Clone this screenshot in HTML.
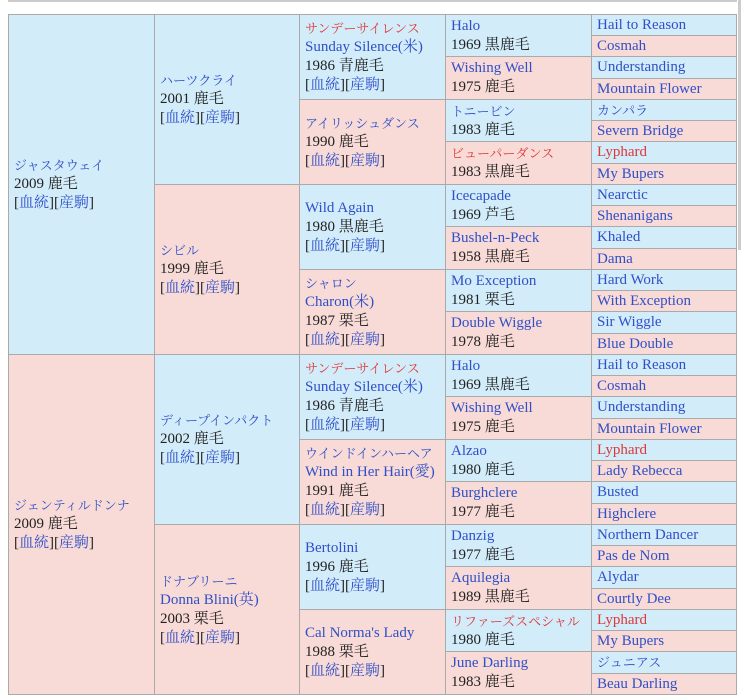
<!DOCTYPE html>
<html><head><meta charset="utf-8"><style>
body{margin:0;width:741px;height:700px;background:#fff;position:relative;overflow:hidden;font-family:"Liberation Serif","Noto Serif CJK SC","Noto Sans CJK JP",serif;font-size:15px;color:#222}
.c{position:absolute;box-sizing:border-box;border:1px solid #aaa;display:flex;flex-direction:column;justify-content:center;padding-left:5px;line-height:19px;white-space:nowrap;overflow:hidden}
.b{background:#d2ecfa}.p{background:#f8dad6}
.n{color:#3050c8}.r{color:#dd3838}
.j{font-size:13px;letter-spacing:0}
a{color:#3050c8;text-decoration:none}
</style></head><body>
<div style="position:absolute;left:8px;top:0;width:729px;height:2px;background:#ccc"></div>
<div style="position:absolute;left:738px;top:0;width:3px;height:250px;background:#ccc"></div>

<!-- Gen1 -->
<div class="c p" style="left:8px;top:354px;width:147px;height:341px"><span class="n j">ジェンティルドンナ</span><span>2009 鹿毛</span><span>[<a>血統</a>][<a>産駒</a>]</span></div>
<div class="c b" style="left:8px;top:14px;width:147px;height:341px"><span class="n j">ジャスタウェイ</span><span>2009 鹿毛</span><span>[<a>血統</a>][<a>産駒</a>]</span></div>

<!-- Gen2 -->
<div class="c b" style="left:154px;top:14px;width:146px;height:171px"><span class="n j">ハーツクライ</span><span>2001 鹿毛</span><span>[<a>血統</a>][<a>産駒</a>]</span></div>
<div class="c p" style="left:154px;top:184px;width:146px;height:171px"><span class="n j">シビル</span><span>1999 鹿毛</span><span>[<a>血統</a>][<a>産駒</a>]</span></div>
<div class="c b" style="left:154px;top:354px;width:146px;height:171px"><span class="n j">ディープインパクト</span><span>2002 鹿毛</span><span>[<a>血統</a>][<a>産駒</a>]</span></div>
<div class="c p" style="left:154px;top:524px;width:146px;height:171px"><span class="n j">ドナブリーニ</span><span class="n">Donna Blini(英)</span><span>2003 栗毛</span><span>[<a>血統</a>][<a>産駒</a>]</span></div>

<!-- Gen3 -->
<div class="c b" style="left:299px;top:14px;width:147px;height:86px"><span class="r j">サンデーサイレンス</span><span class="n">Sunday Silence(米)</span><span>1986 青鹿毛</span><span>[<a>血統</a>][<a>産駒</a>]</span></div>
<div class="c p" style="left:299px;top:99px;width:147px;height:86px"><span class="n j">アイリッシュダンス</span><span>1990 鹿毛</span><span>[<a>血統</a>][<a>産駒</a>]</span></div>
<div class="c b" style="left:299px;top:184px;width:147px;height:86px"><span class="n">Wild Again</span><span>1980 黒鹿毛</span><span>[<a>血統</a>][<a>産駒</a>]</span></div>
<div class="c p" style="left:299px;top:269px;width:147px;height:86px"><span class="n j">シャロン</span><span class="n">Charon(米)</span><span>1987 栗毛</span><span>[<a>血統</a>][<a>産駒</a>]</span></div>
<div class="c b" style="left:299px;top:354px;width:147px;height:86px"><span class="r j">サンデーサイレンス</span><span class="n">Sunday Silence(米)</span><span>1986 青鹿毛</span><span>[<a>血統</a>][<a>産駒</a>]</span></div>
<div class="c p" style="left:299px;top:439px;width:147px;height:86px"><span class="n j">ウインドインハーヘア</span><span class="n">Wind in Her Hair(愛)</span><span>1991 鹿毛</span><span>[<a>血統</a>][<a>産駒</a>]</span></div>
<div class="c b" style="left:299px;top:524px;width:147px;height:86px"><span class="n">Bertolini</span><span>1996 鹿毛</span><span>[<a>血統</a>][<a>産駒</a>]</span></div>
<div class="c p" style="left:299px;top:609px;width:147px;height:86px"><span class="n">Cal Norma's Lady</span><span>1988 栗毛</span><span>[<a>血統</a>][<a>産駒</a>]</span></div>

<!-- Gen4 -->
<div class="c b" style="left:445px;top:14px;width:147px;height:43px"><span class="n">Halo</span><span>1969 黒鹿毛</span></div>
<div class="c p" style="left:445px;top:56px;width:147px;height:44px"><span class="n">Wishing Well</span><span>1975 鹿毛</span></div>
<div class="c b" style="left:445px;top:99px;width:147px;height:43px"><span class="n j">トニービン</span><span>1983 鹿毛</span></div>
<div class="c p" style="left:445px;top:141px;width:147px;height:44px"><span class="r j">ビューパーダンス</span><span>1983 黒鹿毛</span></div>
<div class="c b" style="left:445px;top:184px;width:147px;height:43px"><span class="n">Icecapade</span><span>1969 芦毛</span></div>
<div class="c p" style="left:445px;top:226px;width:147px;height:44px"><span class="n">Bushel-n-Peck</span><span>1958 黒鹿毛</span></div>
<div class="c b" style="left:445px;top:269px;width:147px;height:43px"><span class="n">Mo Exception</span><span>1981 栗毛</span></div>
<div class="c p" style="left:445px;top:311px;width:147px;height:44px"><span class="n">Double Wiggle</span><span>1978 鹿毛</span></div>
<div class="c b" style="left:445px;top:354px;width:147px;height:43px"><span class="n">Halo</span><span>1969 黒鹿毛</span></div>
<div class="c p" style="left:445px;top:396px;width:147px;height:44px"><span class="n">Wishing Well</span><span>1975 鹿毛</span></div>
<div class="c b" style="left:445px;top:439px;width:147px;height:43px"><span class="n">Alzao</span><span>1980 鹿毛</span></div>
<div class="c p" style="left:445px;top:481px;width:147px;height:44px"><span class="n">Burghclere</span><span>1977 鹿毛</span></div>
<div class="c b" style="left:445px;top:524px;width:147px;height:43px"><span class="n">Danzig</span><span>1977 鹿毛</span></div>
<div class="c p" style="left:445px;top:566px;width:147px;height:44px"><span class="n">Aquilegia</span><span>1989 黒鹿毛</span></div>
<div class="c b" style="left:445px;top:609px;width:147px;height:43px"><span class="r j">リファーズスペシャル</span><span>1980 鹿毛</span></div>
<div class="c p" style="left:445px;top:651px;width:147px;height:44px"><span class="n">June Darling</span><span>1983 鹿毛</span></div>

<!-- Gen5 -->
<div class="c b" style="left:591px;top:14px;width:146px;height:22px"><span class="n">Hail to Reason</span></div>
<div class="c p" style="left:591px;top:35px;width:146px;height:22px"><span class="n">Cosmah</span></div>
<div class="c b" style="left:591px;top:56px;width:146px;height:23px"><span class="n">Understanding</span></div>
<div class="c p" style="left:591px;top:78px;width:146px;height:22px"><span class="n">Mountain Flower</span></div>
<div class="c b" style="left:591px;top:99px;width:146px;height:22px"><span class="n j">カンパラ</span></div>
<div class="c p" style="left:591px;top:120px;width:146px;height:22px"><span class="n">Severn Bridge</span></div>
<div class="c b" style="left:591px;top:141px;width:146px;height:23px"><span class="r">Lyphard</span></div>
<div class="c p" style="left:591px;top:163px;width:146px;height:22px"><span class="n">My Bupers</span></div>
<div class="c b" style="left:591px;top:184px;width:146px;height:22px"><span class="n">Nearctic</span></div>
<div class="c p" style="left:591px;top:205px;width:146px;height:22px"><span class="n">Shenanigans</span></div>
<div class="c b" style="left:591px;top:226px;width:146px;height:23px"><span class="n">Khaled</span></div>
<div class="c p" style="left:591px;top:248px;width:146px;height:22px"><span class="n">Dama</span></div>
<div class="c b" style="left:591px;top:269px;width:146px;height:22px"><span class="n">Hard Work</span></div>
<div class="c p" style="left:591px;top:290px;width:146px;height:22px"><span class="n">With Exception</span></div>
<div class="c b" style="left:591px;top:311px;width:146px;height:23px"><span class="n">Sir Wiggle</span></div>
<div class="c p" style="left:591px;top:333px;width:146px;height:22px"><span class="n">Blue Double</span></div>
<div class="c b" style="left:591px;top:354px;width:146px;height:22px"><span class="n">Hail to Reason</span></div>
<div class="c p" style="left:591px;top:375px;width:146px;height:22px"><span class="n">Cosmah</span></div>
<div class="c b" style="left:591px;top:396px;width:146px;height:23px"><span class="n">Understanding</span></div>
<div class="c p" style="left:591px;top:418px;width:146px;height:22px"><span class="n">Mountain Flower</span></div>
<div class="c b" style="left:591px;top:439px;width:146px;height:22px"><span class="r">Lyphard</span></div>
<div class="c p" style="left:591px;top:460px;width:146px;height:22px"><span class="n">Lady Rebecca</span></div>
<div class="c b" style="left:591px;top:481px;width:146px;height:23px"><span class="n">Busted</span></div>
<div class="c p" style="left:591px;top:503px;width:146px;height:22px"><span class="n">Highclere</span></div>
<div class="c b" style="left:591px;top:524px;width:146px;height:22px"><span class="n">Northern Dancer</span></div>
<div class="c p" style="left:591px;top:545px;width:146px;height:22px"><span class="n">Pas de Nom</span></div>
<div class="c b" style="left:591px;top:566px;width:146px;height:23px"><span class="n">Alydar</span></div>
<div class="c p" style="left:591px;top:588px;width:146px;height:22px"><span class="n">Courtly Dee</span></div>
<div class="c b" style="left:591px;top:609px;width:146px;height:22px"><span class="r">Lyphard</span></div>
<div class="c p" style="left:591px;top:630px;width:146px;height:22px"><span class="n">My Bupers</span></div>
<div class="c b" style="left:591px;top:651px;width:146px;height:23px"><span class="n j">ジュニアス</span></div>
<div class="c p" style="left:591px;top:673px;width:146px;height:22px"><span class="n">Beau Darling</span></div>
</body></html>
